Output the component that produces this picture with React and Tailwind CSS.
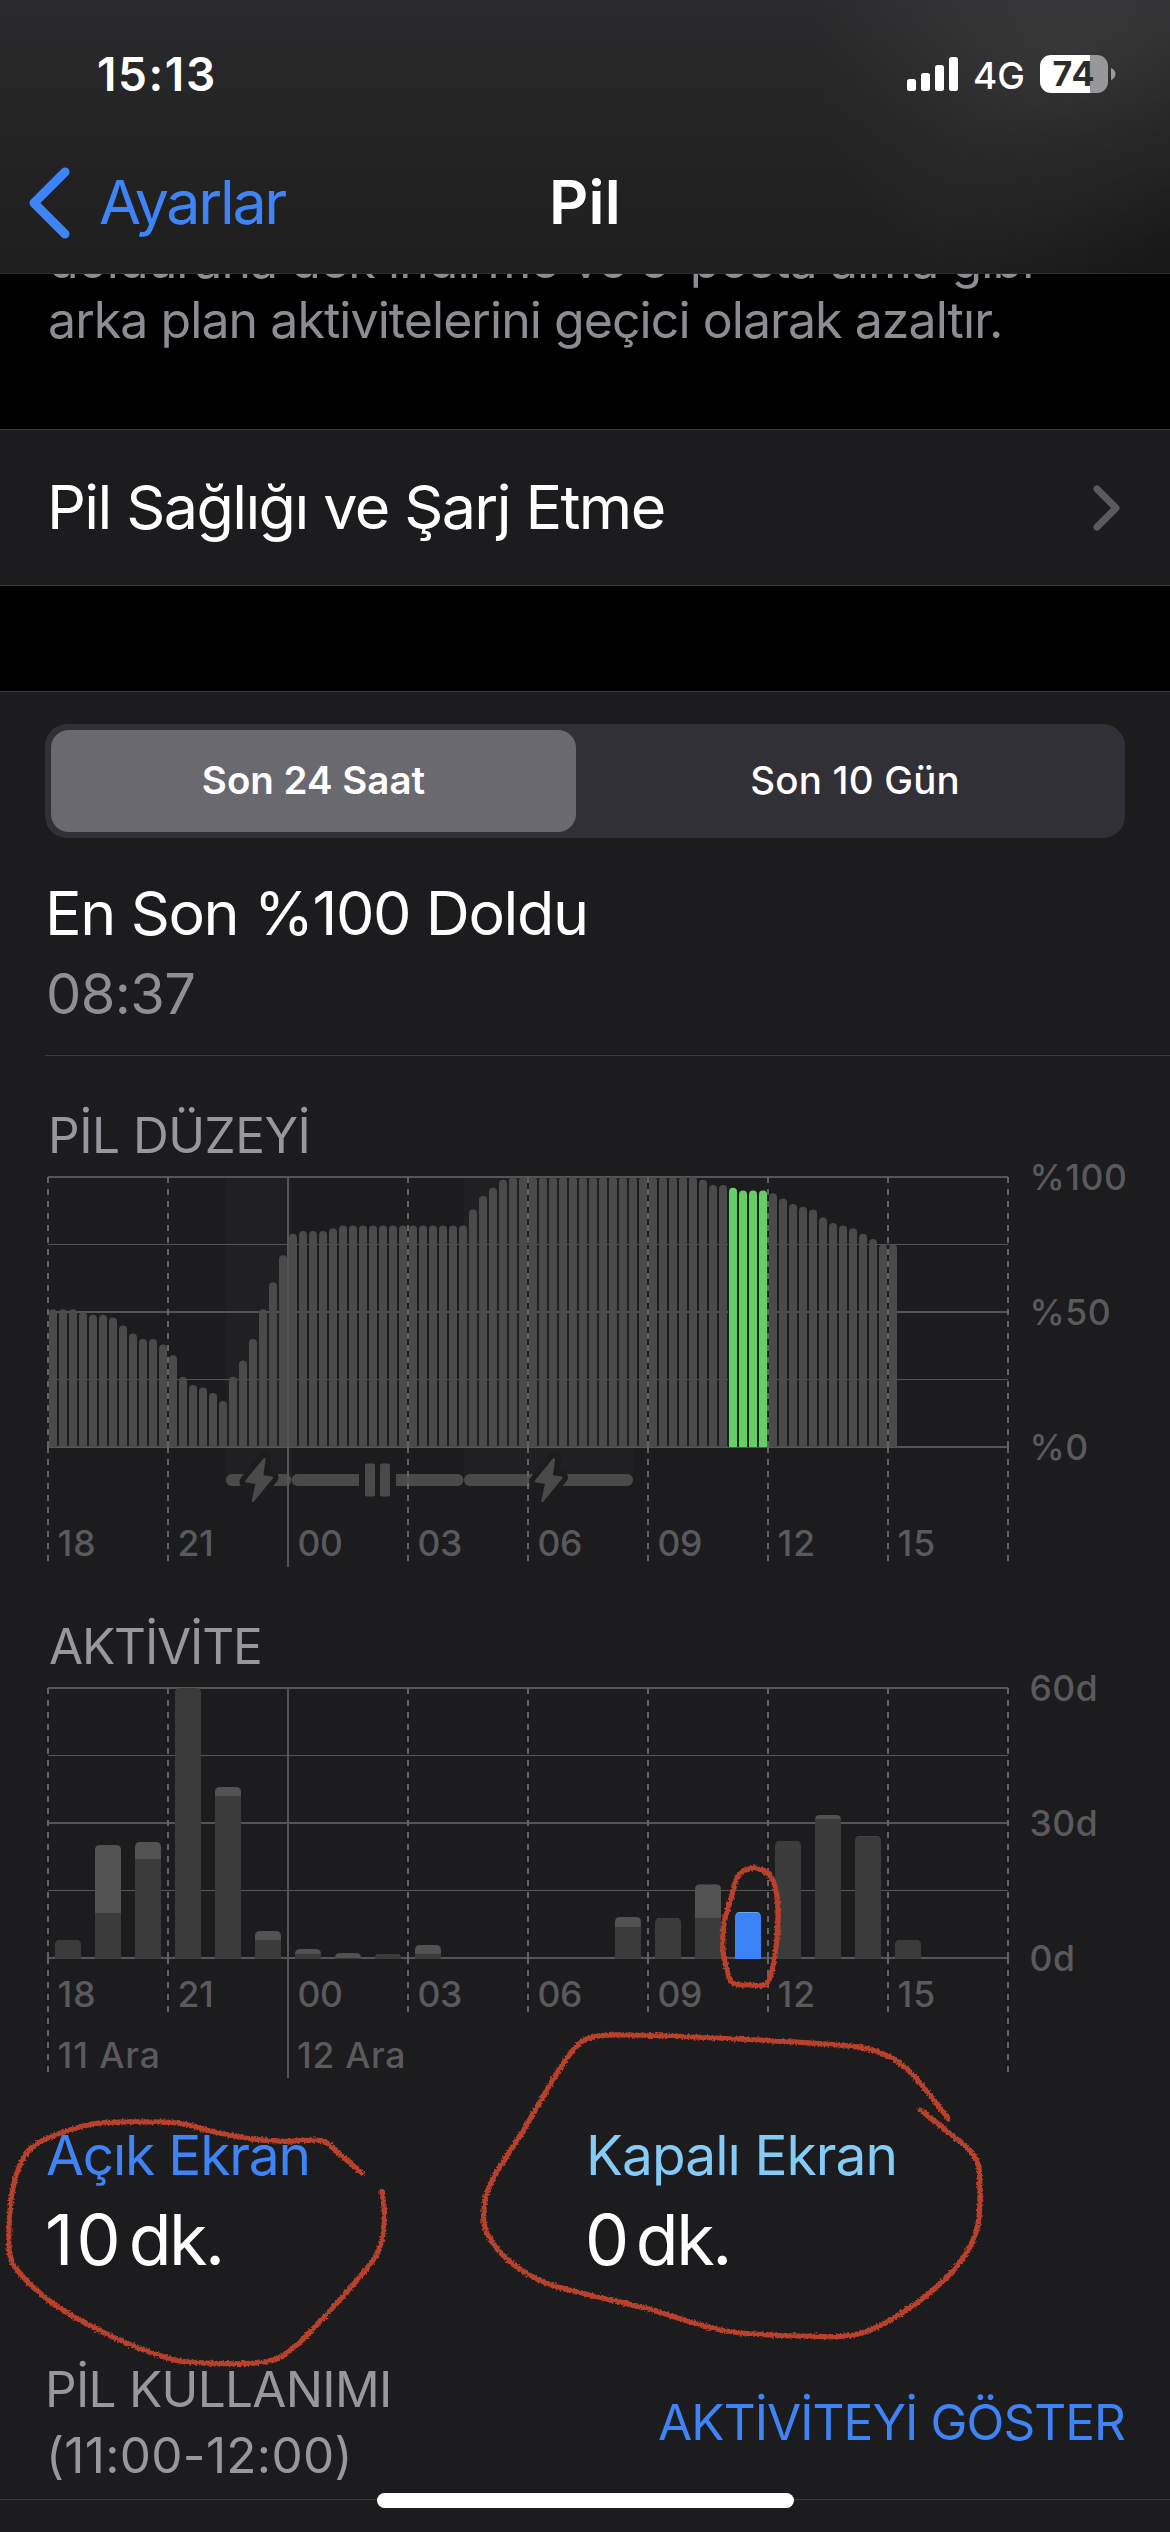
import React from 'react';

// battery level in percent, one value per 15 minutes starting at 18:00
const LEVELS = [
    51, 51, 51, 50, 49, 49, 48, 45, 42, 40, 40, 38,
    34, 26, 23, 22, 20, 17, 26, 32, 40, 51, 61, 71,
    79, 80, 80, 80, 81, ...Array(13).fill(82),
    88, 93, 96, 99, ...Array(19).fill(100),
    99, 97, 97, 96, 95, 95, 95,
    94, 92, 90, 89, 88, 85, 83, 82, 81, 79, 77, 75, 75,
];

// minutes per hour: screen on + screen off
const ACTIVITY = [
    { on: 4, off: 0 }, { on: 10, off: 15.1 }, { on: 22, off: 3.8 },
    { on: 60, off: 0 }, { on: 36, off: 2 }, { on: 4, off: 2 },
    { on: 0.9, off: 1.1 }, { on: 0, off: 1.1 }, { on: 0.9, off: 0 },
    { on: 0.9, off: 2 }, null, null,
    null, null, { on: 6.9, off: 2.2 },
    { on: 8.9, off: 0 }, { on: 8.9, off: 7.5 }, { on: 10.05, off: 0.15 },
    { on: 26, off: 0 }, { on: 30.9, off: 0.9 }, { on: 27, off: 0.1 },
    { on: 4, off: 0 },
];

const HOURS = ['18', '21', '00', '03', '06', '09', '12', '15'];
const SELECTED_HOUR = 17;

const X0 = 48;
const X1 = 1008;
const TOP = 12;
const PLOT_H = 270;

const Grid = () => (
    <g fill="#555558">
        {[0, 1, 2, 3, 4].map((i) => (
            <rect
                key={i}
                x={X0}
                y={i % 2 === 0 ? TOP - 1 + i * 67.5 : TOP + Math.floor(i * 67.5)}
                width={X1 - X0}
                height={i % 2 === 0 ? 2 : 1}
            />
        ))}
    </g>
);

// dashes restart at the base line of the plot
const Verticals = ({ bottom, edgeBottom, midnightBottom }) => (
    <g stroke="#626264" strokeWidth="2">
        {Array.from({ length: 9 }, (_, i) => {
            const x = X0 + i * 120;
            const base = TOP + PLOT_H;
            if (i === 2) {
                return <line key={i} x1={x} x2={x} y1={TOP} y2={midnightBottom} stroke="#555558" />;
            }
            const end = i === 0 || i === 8 ? edgeBottom : bottom;
            return <path key={i} d={`M${x} ${TOP}V${base}M${x} ${base}V${end}`} strokeDasharray="6 6" />;
        })}
    </g>
);

const HourLabels = ({ y }) => (
    <g>
        {HOURS.map((h, i) => (
            <text key={h} x={X0 + 9.5 + i * 120} y={y} letterSpacing={h[0] === '1' ? 1 : -0.3}>{h}</text>
        ))}
    </g>
);

const ScaleLabels = ({ labels }) => (
    <g letterSpacing="0.5">
        {labels.map((l, i) => (
            <text key={l} x="1029.5" y={TOP + 13.3 + i * 135}>{l}</text>
        ))}
    </g>
);

const Bolt = ({ x }) => (
    <g transform={`translate(${x} 315)`} strokeLinejoin="round">
        <path d="M6 -22 L-13 1.8 H-2.5 L-6.7 21.5 L13 -2.8 H3 Z" fill="#1c1c1e" stroke="#1c1c1e" strokeWidth="13" />
        <path d="M5.4 -20.8 L-12.6 1.2 L-2 2.8 L-6 20.8 L12.8 -2.2 L3 -3.8 Z" fill="#4a4a4b" stroke="#4a4a4b" strokeWidth="2.5" />
    </g>
);

const LevelChart = () => (
    <svg width="1170" height="451" viewBox="0 0 1170 451" className="block overflow-visible text-[35.5px] font-medium" fill="#5a5a5d">
        <rect x="226" y={TOP} width="65.5" height="303" fill="#202022" />
        <rect x="464" y={TOP} width="169" height="303" fill="#202022" />
        <Grid />
        {LEVELS.map((v, i) => {
            const x = X0 + 1 + i * 10;
            const y = TOP + PLOT_H * (1 - v / 100);
            const green = i >= 68 && i < 72;
            return (
                <g key={i}>
                    {green && <rect x={x - 1} y={y + 4} width="10" height={TOP + PLOT_H - y - 4} fill="#0c2a10" />}
                    <path
                        d={`M${x} ${TOP + PLOT_H}V${y + 4}a4 4 0 0 1 8 0V${TOP + PLOT_H}Z`}
                        fill={green ? '#67ce67' : '#4a4a4b'}
                    />
                </g>
            );
        })}

        <g fill="#4a4a4b">
            <rect x="226" y="309" width="65.5" height="12" rx="6" />
            <path d="M359 309H297.5a6 6 0 0 0 0 12H359Z" />
            <path d="M396 309H457.5a6 6 0 0 1 0 12H396Z" />
            <rect x="464" y="309" width="169" height="12" rx="6" />
            <rect x="365" y="298.5" width="10" height="33" rx="2" />
            <rect x="380" y="298.5" width="10" height="33" rx="2" />
        </g>
        <Bolt x={259} />
        <Bolt x={548.5} />

        <Verticals bottom={396} edgeBottom={396} midnightBottom={402} />
        <HourLabels y={391} />
        <ScaleLabels labels={['%100', '%50', '%0']} />
    </svg>
);

const ActivityChart = () => (
    <svg width="1170" height="449" viewBox="0 0 1170 449" className="block overflow-visible text-[35.5px] font-medium" fill="#5a5a5d">
        <defs>
            {ACTIVITY.map((a, i) => a && (
                <clipPath key={i} id={`hour-${i}`}>
                    <path d={barPath(i, a.on + a.off)} />
                </clipPath>
            ))}
        </defs>
        <Grid />
        {ACTIVITY.map((a, i) => {
            if (!a) return null;
            const selected = i === SELECTED_HOUR;
            const onH = a.on * 4.5;
            const offH = a.off * 4.5;
            const x = X0 + 7 + i * 40;
            return (
                <g key={i} clipPath={`url(#hour-${i})`}>
                    <rect x={x} y={TOP + PLOT_H - onH - offH} width="26" height={offH + 1} fill={selected ? '#7fcbfb' : '#525252'} />
                    <rect x={x} y={TOP + PLOT_H - onH} width="26" height={onH + 1} fill={selected ? '#3c82f7' : '#3b3b3b'} />
                </g>
            );
        })}
        <Verticals bottom={336} edgeBottom={396} midnightBottom={402} />
        <HourLabels y={331} />
        <text x="57.5" y="392" letterSpacing="0.9">11 Ara</text>
        <text x="297" y="392" letterSpacing="0.7">12 Ara</text>
        <ScaleLabels labels={['60d', '30d', '0d']} />
    </svg>
);

function barPath(i, minutes) {
    const h = minutes * 4.5;
    const r = Math.min(5, h);
    const x = X0 + 7 + i * 40;
    const b = TOP + PLOT_H + 1;
    const t = TOP + PLOT_H - h;
    return `M${x} ${b}V${t + r}q0 ${-r} ${r} ${-r}H${x + 26 - r}q${r} 0 ${r} ${r}V${b}Z`;
}

// hand drawn marker strokes over the page
const MARKS = [
    [[770, 1875], [762, 1870], [753, 1868], [738.4, 1875], [730.7, 1900], [724.2, 1923], [723, 1950], [727, 1970], [732.6, 1983], [749, 1985], [766, 1984], [772.8, 1966.7], [777.4, 1933], [777.8, 1903], [774, 1883], [769, 1875]],
    [[361.6, 2173], [336.8, 2151.7], [321.5, 2140.7], [283, 2141.3], [245, 2138], [214, 2131.7], [183.7, 2124], [160.7, 2122], [103, 2122.7], [76.5, 2128], [42, 2140.7], [26.8, 2153], [17, 2173], [10.7, 2203], [9.6, 2253], [23, 2276.7], [57.4, 2306.7], [115, 2338], [164.6, 2357], [199, 2362.7], [264, 2362], [294.7, 2346.7], [336.8, 2303], [371, 2263], [381, 2243], [384.6, 2216.7], [382, 2191.7]],
    [[948.6, 2119], [909.7, 2071.7], [878.5, 2052], [838, 2045], [738, 2039], [630.7, 2035], [592.8, 2037], [575, 2048], [554.8, 2076.7], [523.6, 2130], [492.3, 2180], [484.3, 2206.7], [487, 2233], [510, 2261.7], [546, 2283], [586, 2294], [648.6, 2309], [724.5, 2330.7], [804.8, 2336], [862.9, 2332.7], [916.4, 2303], [956.6, 2266.7], [976.7, 2230], [979.8, 2186.7], [974.5, 2156.7], [943, 2128], [920, 2110]],
];

const smooth = (pts) => {
    let d = `M${pts[0][0]} ${pts[0][1]}`;
    for (let i = 0; i < pts.length - 1; i++) {
        const p0 = pts[i - 1] || pts[i];
        const p1 = pts[i];
        const p2 = pts[i + 1];
        const p3 = pts[i + 2] || p2;
        d += ` C${p1[0] + (p2[0] - p0[0]) / 6} ${p1[1] + (p2[1] - p0[1]) / 6} ${p2[0] - (p3[0] - p1[0]) / 6} ${p2[1] - (p3[1] - p1[1]) / 6} ${p2[0]} ${p2[1]}`;
    }
    return d;
};

const Marker = () => (
    <svg width="1170" height="2532" viewBox="0 0 1170 2532" className="absolute left-0 top-0 pointer-events-none">
        <filter id="rough" x="0" y="0" width="1170" height="2532" filterUnits="userSpaceOnUse" colorInterpolationFilters="sRGB">
            <feTurbulence type="fractalNoise" baseFrequency="0.5" numOctaves="2" seed="4" />
            <feDisplacementMap in="SourceGraphic" scale="5" xChannelSelector="R" yChannelSelector="G" />
        </filter>
        <g filter="url(#rough)" fill="none" stroke="#b9402b" strokeWidth="5.2" strokeLinecap="round">
            {MARKS.map((m, i) => <path key={i} d={smooth(m)} />)}
        </g>
    </svg>
);

const StatusBar = () => (
    <div className="h-[148px] flex items-center justify-between pl-[97px] pr-[54px]">
        <span className="text-[46px] font-semibold tracking-[1.6px]">15:13</span>
        <div className="flex items-center">
            <svg width="52" height="34" viewBox="0 0 52 34" fill="#fff">
                <rect x="0" y="22" width="9" height="12" rx="2.5" />
                <rect x="14" y="16" width="9" height="18" rx="2.5" />
                <rect x="28" y="8" width="9" height="26" rx="2.5" />
                <rect x="42" y="0" width="9" height="34" rx="2.5" />
            </svg>
            <span className="ml-[14px] mt-[3px] w-[67px] text-[37px] font-medium">4G</span>
            <div className="w-[68px] h-[38px] rounded-[11px] overflow-hidden flex items-center justify-center bg-[linear-gradient(90deg,#ffffff_50px,#98989a_50px)]">
                <span className="text-[34px] leading-[38px] font-bold tracking-[1px] text-[#2c2c2d]">74</span>
            </div>
            <svg width="5" height="12" viewBox="0 0 5 12" className="ml-[3px]">
                <path d="M0 0C6 2 6 10 0 12Z" fill="#98989a" />
            </svg>
        </div>
    </div>
);

const Header = () => (
    <header className="h-[274px] border-b border-[#2f2f31] bg-[radial-gradient(circle_at_1070px_50px,#ffffff12,#ffffff00_260px),radial-gradient(circle_at_1170px_260px,#00000048,#00000000_240px),linear-gradient(#2b2b2d,#232324_50%,#1e1e1f)]">
        <StatusBar />
        <div className="h-[110px] grid grid-cols-3 items-center text-[61px]">
            <div className="flex items-center pl-[28px] text-[#3f84f6]">
                <svg width="42" height="72" viewBox="0 0 42 72" fill="none" stroke="currentColor" strokeWidth="9" strokeLinecap="round" strokeLinejoin="round">
                    <path d="M37 5L6 36L37 67" />
                </svg>
                <span className="ml-[29px] tracking-[-2.3px]">Ayarlar</span>
            </div>
            <h1 className="text-center font-semibold tracking-[0.3px]">Pil</h1>
        </div>
    </header>
);

const App = () => {
    return (
        <div className="relative w-[1170px] h-[2532px] overflow-hidden bg-black text-white font-['Inter',sans-serif] flex flex-col">
            <Header />

            <div className="h-[155px] overflow-hidden pl-[48px] text-[50px] leading-[60px] text-[#8c8c92] whitespace-nowrap">
                <p className="-mt-[44px] tracking-[-0.91px]">doldurana dek indirme ve e-posta alma gibi</p>
                <p className="tracking-[-0.94px]">arka plan aktivitelerini geçici olarak azaltır.</p>
            </div>

            <div className="h-[157px] flex items-center justify-between pl-[47px] pr-[48px] bg-[#1c1c1e] border-y border-[#3b3b3e]">
                <span className="text-[61px] tracking-[-1.6px]">Pil Sağlığı ve Şarj Etme</span>
                <svg width="30" height="48" viewBox="0 0 30 48" fill="none" stroke="#5a5a5e" strokeWidth="7" strokeLinecap="round" strokeLinejoin="round">
                    <path d="M5 5L24 24L5 43" />
                </svg>
            </div>

            <div className="mt-[105px] flex-1 bg-[#1c1c1e] border-t border-[#3b3b3e]">
                <div className="mt-[32px] mx-[45px] h-[114px] py-[6px] pl-[6px] flex rounded-[22px] bg-[#313036] text-[38.5px]">
                    <button className="w-[525px] rounded-[18px] bg-[#6a696f] font-semibold">Son 24 Saat</button>
                    <button className="ml-auto w-[540px] font-medium tracking-[0.2px]">Son 10 Gün</button>
                </div>

                <div className="mt-[35px] pl-[45px]">
                    <p className="text-[61px] leading-[80px] tracking-[-1.4px]">En Son %100 Doldu</p>
                    <p className="pl-px text-[56px] leading-[82px] tracking-[-0.6px] text-[#8e8e93]">08:37</p>
                </div>
                <div className="mt-[20px] ml-[45px] h-px bg-[#3b3b3e]" />

                <h2 className="mt-[49px] pl-[48px] text-[49.5px] leading-[60px] tracking-[-0.48px] text-[#98979e]">PİL DÜZEYİ</h2>
                <LevelChart />

                <h2 className="pl-[49px] text-[49.5px] leading-[60px] tracking-[-1.15px] text-[#98979e]">AKTİVİTE</h2>
                <ActivityChart />

                <div className="flex pl-[45px] leading-[60px]">
                    <div className="w-[541px]">
                        <p className="pl-px text-[55px] tracking-[-1.2px] text-[#3f84f6]">Açık Ekran</p>
                        <p className="mt-[15px] text-[70px] leading-[80px] tracking-[-2.4px]">
                            <span className="tracking-[3px]">10</span>
                            <span className="ml-[5px]">dk.</span>
                        </p>
                    </div>
                    <div>
                        <p className="text-[55px] tracking-[-0.95px] text-[#85cbf8]">Kapalı Ekran</p>
                        <p className="-ml-px mt-[15px] text-[70px] leading-[80px] tracking-[-2.4px]">
                            <span>0</span>
                            <span className="ml-[9px]">dk.</span>
                        </p>
                    </div>
                </div>

                <div className="mt-[76px] pl-[45px] pr-[45px] flex items-center justify-between text-[49.5px] leading-[66px]">
                    <div className="text-[#98979e]">
                        <p className="tracking-[-0.7px]">PİL KULLANIMI</p>
                        <p className="pl-px tracking-[0.3px]">(11:00-12:00)</p>
                    </div>
                    <span className="tracking-[-0.93px] text-[#3f84f6]">AKTİVİTEYİ GÖSTER</span>
                </div>
                <div className="mt-[11px] h-px bg-[#3b3b3e]" />
            </div>

            <Marker />
            <div className="absolute left-[377px] top-[2493px] w-[417px] h-[15px] rounded-full bg-white" />
        </div>
    );
};

export default App;
